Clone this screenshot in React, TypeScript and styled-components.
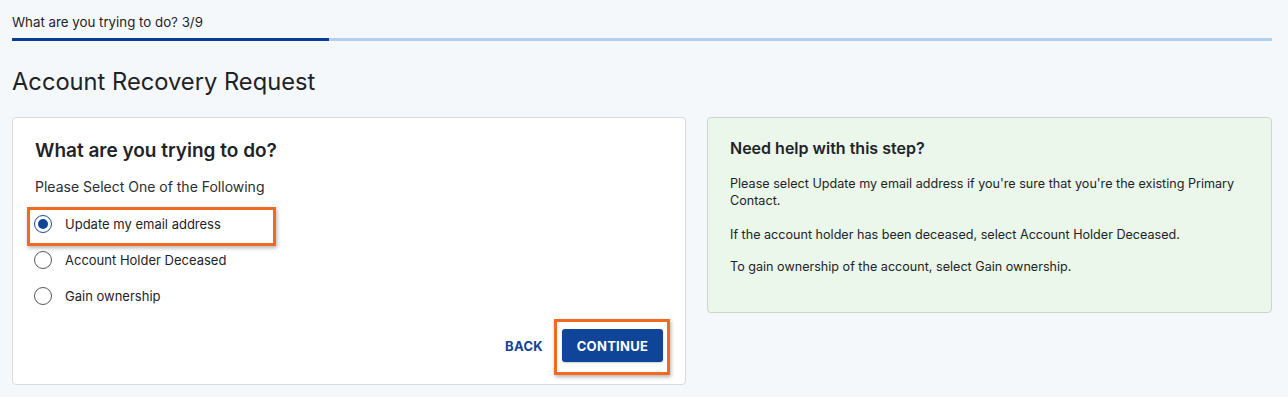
import React, { useState } from "react";
import styled, { createGlobalStyle } from "styled-components";

const Global = createGlobalStyle`
  html, body { margin: 0; padding: 0; background: #f5f8fb; }
  body { font-family: Inter, "Noto Sans", Arial, sans-serif; color: #1f2328; }
  * { box-sizing: border-box; }
`;

const Page = styled.div`
  padding: 14px 16px 0 12px;
  display: flex;
  flex-direction: column;
`;

const StepLabel = styled.div`
  font-size: 13.3px;
  line-height: 16px;
  color: #1f2328;
`;

const Track = styled.div`
  margin-top: 8px;
  height: 3px;
  background: #b5cff3;
  width: 100%;
`;

const Fill = styled.div`
  height: 100%;
  background: #0b3d94;
`;

const Title = styled.h1`
  margin: 26px 0 0 0;
  font-size: 23.7px;
  line-height: 30px;
  font-weight: 400;
  color: #1f2328;
`;

const Columns = styled.div`
  margin-top: 20px;
  display: grid;
  grid-template-columns: 674fr 565fr;
  gap: 21px;
  align-items: start;
`;

const Card = styled.section<{ $tone?: "white" | "green" }>`
  background: ${(p) => (p.$tone === "green" ? "#eaf7ea" : "#ffffff")};
  border: 1px solid ${(p) => (p.$tone === "green" ? "#cdd6cd" : "#d6dbe0")};
  border-radius: 4px;
  padding: ${(p) => (p.$tone === "green" ? "19px 22px 37px 22px" : "22px 15px 9px 22px")};
  display: flex;
  flex-direction: column;
`;

const CardTitle = styled.h2<{ $size?: number }>`
  margin: 0;
  font-size: ${(p) => p.$size ?? 19}px;
  line-height: 22px;
  font-weight: 600;
  color: #1f2328;
`;

const Subtitle = styled.div`
  margin-top: 16px;
  font-size: 14px;
  line-height: 18px;
  color: #2a2e33;
`;

const Options = styled.div`
  margin-top: 10px;
  display: flex;
  flex-direction: column;
`;

const OptionRow = styled.label`
  position: relative;
  display: flex;
  align-items: center;
  gap: 13px;
  height: 36px;
  font-size: 13px;
  color: #1f2328;
  cursor: pointer;
`;

const Highlight = styled.span`
  position: absolute;
  left: -8px;
  top: 1px;
  width: 249px;
  height: 39px;
  border: 3px solid #f26a1f;
  box-shadow: 1px 2px 4px rgba(0, 0, 0, 0.3);
  pointer-events: none;
`;

const Radio = styled.span<{ $checked?: boolean }>`
  margin-left: -1px;
  width: 18px;
  height: 18px;
  border-radius: 50%;
  border: 1px solid ${(p) => (p.$checked ? "#1a4a9c" : "#555a60")};
  display: flex;
  align-items: center;
  justify-content: center;
  flex-shrink: 0;
  background: #fff;
  &::after {
    content: "";
    width: 10px;
    height: 10px;
    border-radius: 50%;
    background: ${(p) => (p.$checked ? "#0f4598" : "transparent")};
  }
`;

const Actions = styled.div`
  margin-top: 5px;
  display: flex;
  justify-content: flex-end;
  align-items: center;
  gap: 11px;
`;

const BackButton = styled.button`
  background: none;
  border: none;
  padding: 0;
  margin-top: -3px;
  font-family: inherit;
  font-size: 13px;
  font-weight: 700;
  letter-spacing: 0.3px;
  color: #14409a;
  cursor: pointer;
`;

const ButtonWrap = styled.div`
  position: relative;
  padding: 10px 7px 13px 8px;
`;

const ButtonHighlight = styled.span`
  position: absolute;
  inset: 0;
  border: 3px solid #f26a1f;
  box-shadow: 1px 2px 4px rgba(0, 0, 0, 0.3);
  pointer-events: none;
`;

const PrimaryButton = styled.button`
  position: relative;
  display: block;
  height: 33px;
  width: 101px;
  background: #0f4598;
  color: #fff;
  border: none;
  border-radius: 3px;
  font-family: inherit;
  font-size: 13px;
  font-weight: 700;
  letter-spacing: 0.3px;
  cursor: pointer;
  box-shadow: 0 1px 2px rgba(0, 0, 0, 0.2);
`;

const HelpText = styled.p<{ $gap: number }>`
  margin: ${(p) => p.$gap}px 0 0 0;
  font-size: 12.6px;
  line-height: 17px;
  color: #1f2328;
`;

const options = ["Update my email address", "Account Holder Deceased", "Gain ownership"];

export default function App() {
  const [selected, setSelected] = useState(0);
  return (
    <Page>
      <Global />
      <StepLabel>What are you trying to do? 3/9</StepLabel>
      <Track>
        <Fill style={{ width: `${(317 / 1260) * 100}%` }} />
      </Track>
      <Title>Account Recovery Request</Title>
      <Columns>
        <Card>
          <CardTitle>What are you trying to do?</CardTitle>
          <Subtitle>Please Select One of the Following</Subtitle>
          <Options>
            {options.map((o, i) => (
              <OptionRow key={o} onClick={() => setSelected(i)}>
                {i === 0 && <Highlight />}
                <Radio $checked={selected === i} />
                {o}
              </OptionRow>
            ))}
          </Options>
          <Actions>
            <BackButton>BACK</BackButton>
            <ButtonWrap>
              <ButtonHighlight />
              <PrimaryButton>CONTINUE</PrimaryButton>
            </ButtonWrap>
          </Actions>
        </Card>
        <Card $tone="green">
          <CardTitle $size={16}>Need help with this step?</CardTitle>
          <HelpText $gap={16}>
            Please select Update my email address if you're sure that you're the existing Primary Contact.
          </HelpText>
          <HelpText $gap={17}>If the account holder has been deceased, select Account Holder Deceased.</HelpText>
          <HelpText $gap={15}>To gain ownership of the account, select Gain ownership.</HelpText>
        </Card>
      </Columns>
    </Page>
  );
}
